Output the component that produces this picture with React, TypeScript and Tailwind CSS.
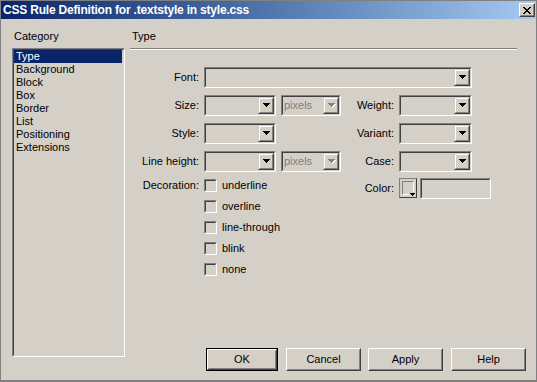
import React from "react";

const categories = ["Type", "Background", "Block", "Box", "Border", "List", "Positioning", "Extensions"];
const decorations = ["underline", "overline", "line-through", "blink", "none"];

function Arrow({ disabled }: { disabled?: boolean }) {
  const rows = [
    [0, 7],
    [1, 5],
    [2, 3],
    [3, 1],
  ];
  return (
    <svg width="8" height="5" viewBox="0 0 8 5" shapeRendering="crispEdges">
      {disabled &&
        rows.map(([x, w], i) => <rect key={"s" + i} x={x + 1} y={i + 1} width={w} height={1} fill="#ffffff" />)}
      {rows.map(([x, w], i) => (
        <rect key={i} x={x} y={i} width={w} height={1} fill={disabled ? "#808080" : "#000000"} />
      ))}
    </svg>
  );
}

function DropButton({ disabled }: { disabled?: boolean }) {
  return (
    <div className="flex h-full w-[16px] border border-t-[#d4d0c8] border-l-[#d4d0c8] border-b-[#404040] border-r-[#404040]">
      <div className="flex flex-1 items-center justify-center border border-t-white border-l-white border-b-[#808080] border-r-[#808080] pl-px">
        <Arrow disabled={disabled} />
      </div>
    </div>
  );
}

function Sunken({ className, children }: { className: string; children?: React.ReactNode }) {
  return (
    <div className={"flex border border-t-[#808080] border-l-[#808080] border-b-white border-r-white " + className}>
      <div className="flex flex-1 border border-t-[#404040] border-l-[#404040] border-b-[#d4d0c8] border-r-[#d4d0c8]">
        {children}
      </div>
    </div>
  );
}

function Combo({ className, text, disabled }: { className: string; text?: string; disabled?: boolean }) {
  return (
    <Sunken className={"h-[21px] " + className}>
      <div className="flex-1 pl-px leading-[17px] text-[#808080]">{text}</div>
      <DropButton disabled={disabled} />
    </Sunken>
  );
}

function Label({ children }: { children: React.ReactNode }) {
  return <div className="h-[21px] text-right leading-[21px]">{children}</div>;
}

function PushButton({ label, primary }: { label: string; primary?: boolean }) {
  const face = (
    <div className="flex h-full border border-t-white border-l-white border-b-[#404040] border-r-[#404040]">
      <div className="flex flex-1 items-center justify-center border border-t-[#d4d0c8] border-l-[#d4d0c8] border-b-[#808080] border-r-[#808080]">
        {label}
      </div>
    </div>
  );
  if (primary) {
    return <div className="h-[23px] w-[72px] border border-black">{face}</div>;
  }
  return <div className="h-[23px] w-[75px]">{face}</div>;
}

function CloseGlyph() {
  const rows = [
    [0, 6],
    [1, 5],
    [2, 4],
    [3, 3],
    [2, 4],
    [1, 5],
    [0, 6],
  ];
  return (
    <svg width="8" height="7" viewBox="0 0 8 7" shapeRendering="crispEdges">
      {rows.map(([a, b], i) => (
        <g key={i}>
          <rect x={a} y={i} width={2} height={1} fill="#000" />
          <rect x={b} y={i} width={2} height={1} fill="#000" />
        </g>
      ))}
    </svg>
  );
}

export default function App() {
  return (
    <div className="flex h-[382px] w-[537px] flex-col border border-b-2 border-[#808080] bg-[#d4d0c8] font-['Liberation_Sans',Arial,sans-serif] text-[11px] text-black">
      {/* Title bar */}
      <div className="flex h-[18px] shrink-0 items-center bg-linear-to-r from-[#0a246a] to-[#a6caf0] pl-[2px] pr-[1px]">
        <span className="flex-1 text-[12px] font-bold tracking-[-0.2px] text-white">
          CSS Rule Definition for .textstyle in style.css
        </span>
        <div className="h-[14px] w-[16px]">
          <div className="flex h-full border border-t-white border-l-white border-b-[#404040] border-r-[#404040]">
            <div className="flex flex-1 items-center justify-center border border-t-[#d4d0c8] border-l-[#d4d0c8] border-b-[#808080] border-r-[#808080] bg-[#d4d0c8]">
              <CloseGlyph />
            </div>
          </div>
        </div>
      </div>

      {/* Body */}
      <div className="flex flex-1 pl-[11px]">
        {/* Category column */}
        <div className="flex w-[113px] flex-col pt-[11px] pb-[23px]">
          <div className="h-[13px] pl-[2px] leading-[13px]">Category</div>
          <Sunken className="mt-[5px] flex-1">
            <div className="flex flex-1 flex-col">
              {categories.map((c, i) => (
                <div
                  key={c}
                  className={
                    i === 0
                      ? "mr-px h-[13px] bg-[#0a246a] pl-[2px] leading-[13px] text-white"
                      : "h-[13px] pl-[2px] leading-[13px]"
                  }
                >
                  {c}
                </div>
              ))}
            </div>
          </Sunken>
        </div>

        {/* Panel */}
        <div className="ml-[5px] flex w-[396px] flex-col pt-[11px] pb-[9px]">
          <div className="h-[13px] pl-[2px] leading-[13px]">Type</div>
          <div className="mt-[5px] h-[2px] w-[387px] border-t border-b border-t-[#808080] border-b-white" />

          <div className="mt-[17px] grid grid-cols-[69px_72px_60px_48px_92px] gap-x-[5px] gap-y-[7px]">
            <Label>Font:</Label>
            <div className="col-span-4">
              <Combo className="w-[268px]" />
            </div>

            <Label>Size:</Label>
            <Combo className="w-[72px]" />
            <Combo className="w-[60px]" text="pixels" disabled />
            <Label>Weight:</Label>
            <Combo className="w-[73px]" />

            <Label>Style:</Label>
            <Combo className="w-[72px]" />
            <div />
            <Label>Variant:</Label>
            <Combo className="w-[73px]" />

            <Label>Line height:</Label>
            <Combo className="w-[72px]" />
            <Combo className="w-[60px]" text="pixels" disabled />
            <Label>Case:</Label>
            <Combo className="w-[73px]" />

            <div className="h-[13px] text-right leading-[13px]">Decoration:</div>
            <div className="col-span-2 flex flex-col gap-[8px]">
              {decorations.map((d) => (
                <div key={d} className="flex h-[13px] items-center">
                  <Sunken className="h-[13px] w-[13px]" />
                  <span className="ml-[5px] leading-[13px]">{d}</span>
                </div>
              ))}
            </div>
            <div className="-mt-px h-[21px] text-right leading-[21px]">Color:</div>
            <div className="-mt-px flex h-[20px] gap-[3px]">
              <div className="flex h-[20px] w-[18px] border border-t-[#808080] border-l-[#808080] border-b-[#404040] border-r-[#404040]">
                <div className="relative m-[2px] flex-1 border border-t-[#808080] border-l-[#808080] border-b-white border-r-white">
                  <div className="absolute right-[-3px] bottom-[-3px] flex h-[5px] w-[7px] items-center justify-center bg-[#d4d0c8]">
                    <svg width="5" height="3" viewBox="0 0 5 3" shapeRendering="crispEdges">
                      <rect x="0" y="0" width="5" height="1" fill="#000" />
                      <rect x="1" y="1" width="3" height="1" fill="#000" />
                      <rect x="2" y="2" width="1" height="1" fill="#000" />
                    </svg>
                  </div>
                </div>
              </div>
              <Sunken className="h-[21px] w-[71px]" />
            </div>
          </div>

          <div className="flex-1" />

          <div className="flex justify-end">
            <PushButton label="OK" primary />
            <div className="ml-[8px]">
              <PushButton label="Cancel" />
            </div>
            <div className="ml-[7px]">
              <PushButton label="Apply" />
            </div>
            <div className="ml-[8px]">
              <PushButton label="Help" />
            </div>
          </div>
        </div>
      </div>
    </div>
  );
}
